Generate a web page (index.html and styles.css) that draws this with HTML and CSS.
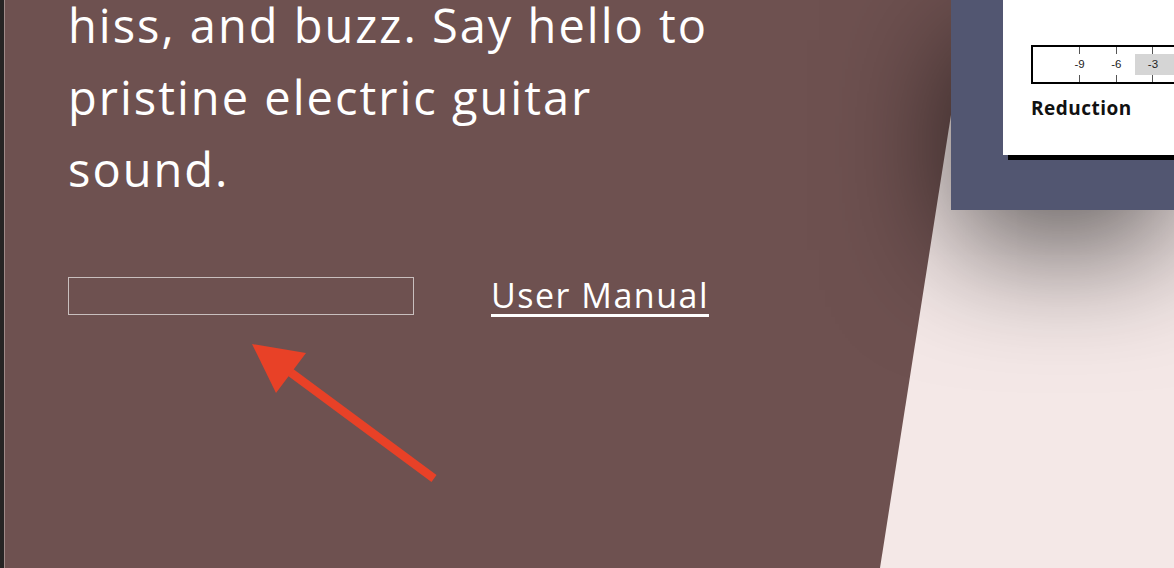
FILE: index.html
```html
<!DOCTYPE html>
<html lang="en">
<head>
<meta charset="utf-8">
<title>Noise reduction pedal</title>
<link rel="stylesheet" href="styles.css">
</head>
<body>
<div class="page">
  <div class="hero">
    <section class="copy">
      <p class="lead">hiss, and buzz. Say hello to pristine electric guitar sound.</p>
      <div class="actions">
        <input class="email" type="text" aria-label="Email">
        <a class="manual" href="#">User Manual</a>
      </div>
    </section>
    <aside class="product">
      <div class="card">
        <div class="meter">
          <span class="cell spacer"></span>
          <span class="cell"><i class="tick"></i><b class="lbl">-9</b><i class="tick"></i></span>
          <span class="cell"><i class="tick"></i><b class="lbl">-6</b><i class="tick"></i></span>
          <span class="cell on"><i class="tick"></i><b class="lbl">-3</b><i class="tick"></i></span>
          <span class="cell on"><i class="tick"></i><b class="lbl">0</b><i class="tick"></i></span>
        </div>
        <div class="meter-name">Reduction</div>
      </div>
    </aside>
  </div>
  <svg class="pointer" width="220" height="170" viewBox="240 330 220 170" aria-hidden="true">
    <line x1="434" y1="478.5" x2="286" y2="369" stroke="#e84127" stroke-width="8.5"/>
    <polygon points="252,344 306,353 276,393" fill="#e84127"/>
  </svg>
</div>
</body>
</html>
```
FILE: styles.css
```css
html, body {
  margin: 0;
  padding: 0;
}
body {
  background: #f4e8e7;
  font-family: "Open Sans", "Liberation Sans", sans-serif;
  overflow: hidden;
}
.page {
  position: relative;
  height: 568px;
  overflow: hidden;
  border-left: 4px solid #262424;
  background: #f4e8e7;
}
.page::before {
  content: "";
  position: absolute;
  inset: 0;
  background: #6e5150;
  border-left: 1px solid #a08a89;
  clip-path: polygon(0 0, 965px 0, 876px 100%, 0 100%);
}
.hero {
  position: relative;
  display: grid;
  grid-template-columns: 1fr 223px;
  height: 100%;
}
.copy {
  padding-left: 64px;
  position: relative;
}
.lead {
  margin: -11px 0 0;
  width: 670px;
  color: #fff;
  font-size: 47px;
  line-height: 72px;
  font-weight: 400;
  letter-spacing: 2px;
}
.actions {
  display: flex;
  align-items: center;
  gap: 77px;
  margin-top: 72px;
}
.email {
  box-sizing: border-box;
  width: 346px;
  height: 38px;
  margin: 0;
  padding: 0 10px;
  border: 1px solid #c9bfbe;
  background: transparent;
  color: #fff;
  font: inherit;
  outline: none;
}
.manual {
  color: #fff;
  font-size: 34px;
  line-height: 40px;
  letter-spacing: 1.5px;
  text-decoration: underline;
  text-decoration-thickness: 3px;
  text-underline-offset: 6px;
  margin-top: -2px;
}
.product {
  align-self: start;
  height: 210px;
  background: #525671;
  box-shadow: 0 40px 120px rgba(0, 0, 0, 0.6);
  position: relative;
  z-index: 1;
}
.card {
  margin-left: 52px;
  width: 320px;
  height: 155px;
  box-sizing: border-box;
  padding: 45px 0 0 28px;
  background: #fff;
  box-shadow: 5px 5px 0 #000;
}
.meter {
  display: flex;
  width: 300px;
  height: 39px;
  box-sizing: border-box;
  border: 2px solid #000;
  border-right: none;
}
.cell {
  display: flex;
  flex-direction: column;
  align-items: center;
  width: 36.67px;
  flex: none;
}
.cell.spacer {
  width: 28.3px;
}
.tick {
  display: block;
  width: 1px;
  height: 7px;
  background: #555;
}
.lbl {
  display: block;
  align-self: stretch;
  height: 21px;
  line-height: 21px;
  text-align: center;
  font-family: "Liberation Sans", Arial, sans-serif;
  font-weight: 400;
  font-size: 11.5px;
  color: #222;
}
.cell.on .lbl {
  background: #d5d5d5;
}
.meter-name {
  margin-top: 12px;
  font-family: "Open Sans", sans-serif;
  font-weight: 700;
  font-size: 19px;
  line-height: 24px;
  letter-spacing: 0.5px;
  color: #111;
}
.pointer {
  position: absolute;
  left: 236px;
  top: 330px;
}
```
